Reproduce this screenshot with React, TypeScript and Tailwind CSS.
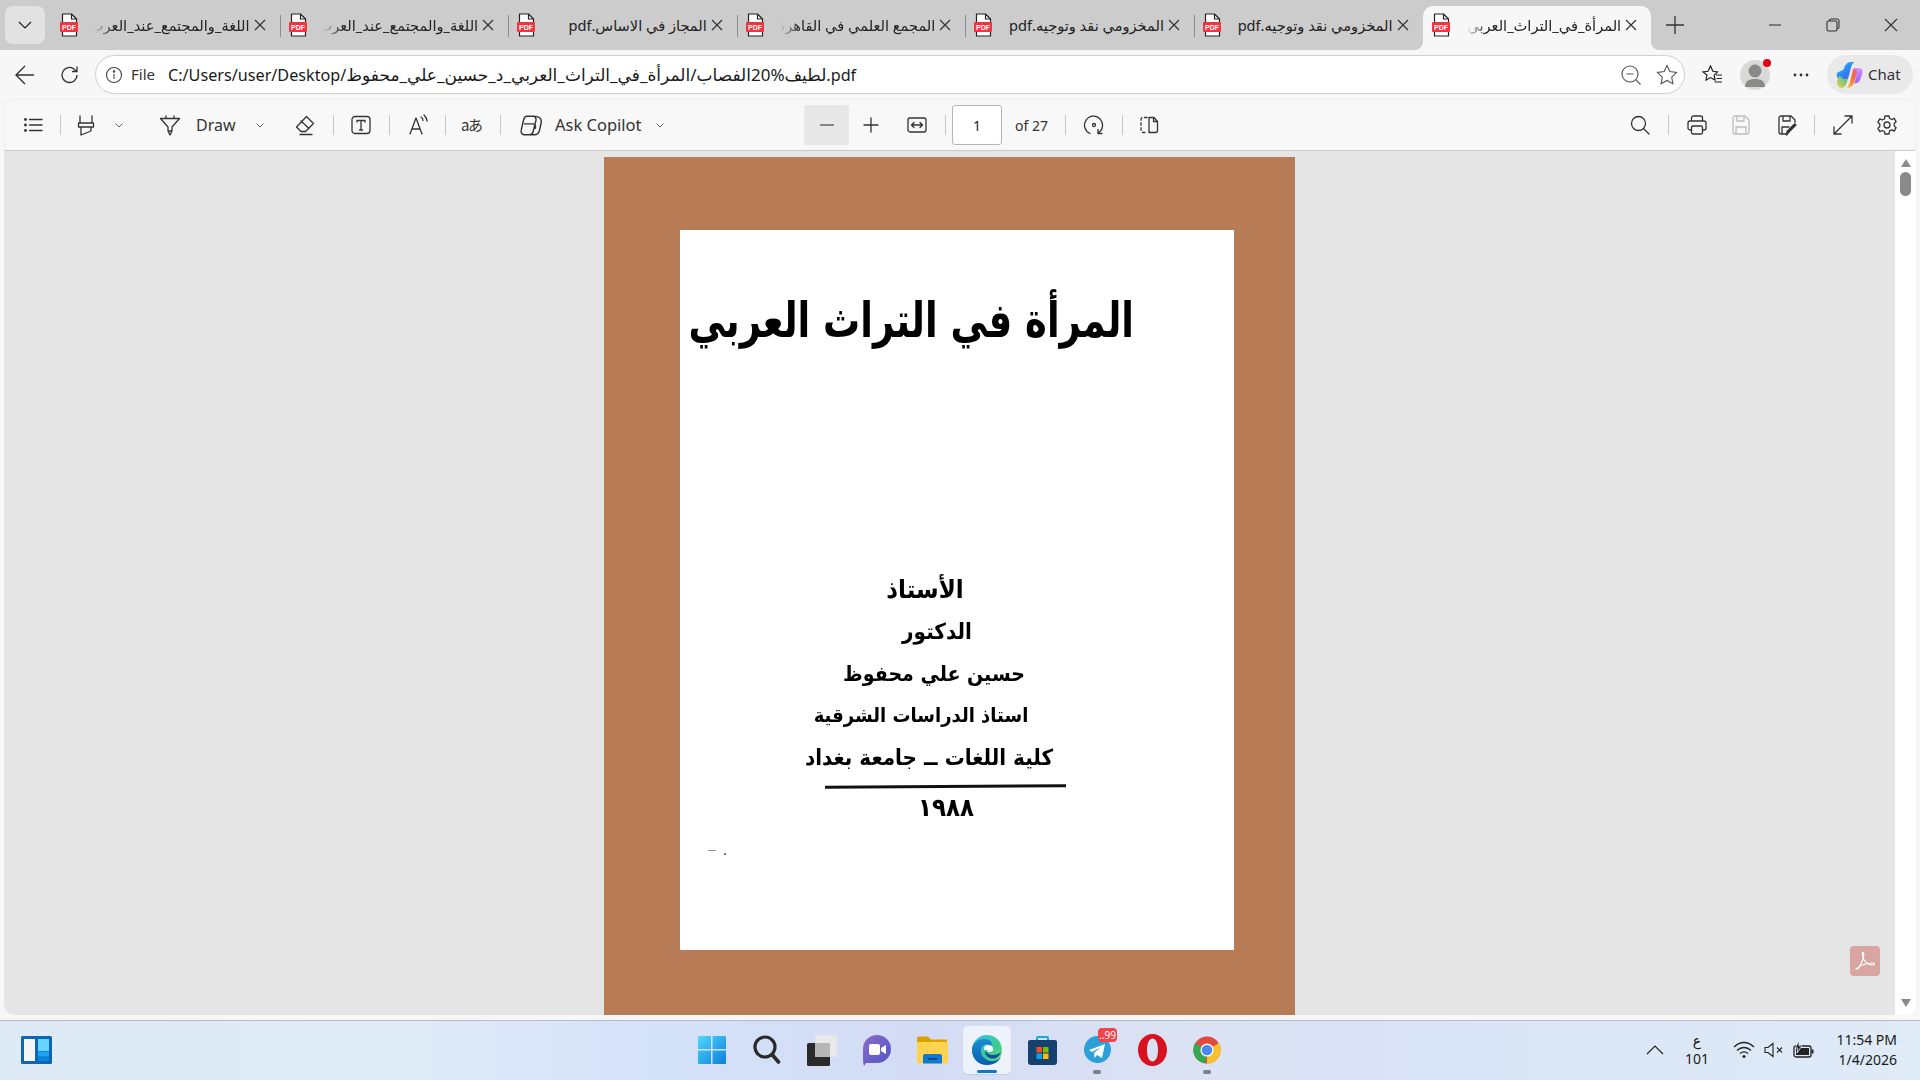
import React from "react";

const S = ({ s = 22, children, w = 1.3, c = "#333", cls = "" }: { s?: number; children: React.ReactNode; w?: number; c?: string; cls?: string }) => (
  <svg width={s} height={s} viewBox="0 0 22 22" fill="none" stroke={c} strokeWidth={w} strokeLinecap="round" strokeLinejoin="round" className={`shrink-0 ${cls}`}>
    {children}
  </svg>
);

const Sep = ({ cls = "" }: { cls?: string }) => <div className={`h-5 w-px shrink-0 bg-[#c6c6c6] ${cls}`} />;

const Chev = ({ cls = "" }: { cls?: string }) => (
  <svg width="12" height="12" viewBox="0 0 12 12" fill="none" stroke="#666" strokeWidth="1" className={`shrink-0 ${cls}`}>
    <path d="M2.5 4.5 6 8l3.5-3.5" />
  </svg>
);

const PdfIcon = () => (
  <svg width="20" height="24" viewBox="0 0 20 24" className="shrink-0">
    <path d="M3.5 1h9l5 5v17h-14z" fill="#fff" stroke="#222" strokeWidth="1.2" strokeLinejoin="round" />
    <path d="M12.5 1v5h5" fill="none" stroke="#222" strokeWidth="1.2" />
    <rect x="1" y="9" width="18" height="10" rx="1" fill="#f5333f" />
    <text x="10" y="16.800" textAnchor="middle" fontSize="7" fontWeight="700" fill="#fff" fontFamily="Liberation Sans">PDF</text>
  </svg>
);

const tabs = [
  { t: "اللغة_والمجتمع_عند_العرب", fade: true },
  { t: "اللغة_والمجتمع_عند_العرب", fade: true },
  { t: "المجاز في الاساس.pdf", fade: false },
  { t: "المجمع العلمي في القاهرة", fade: true },
  { t: "المخزومي نقد وتوجيه.pdf", fade: false },
  { t: "المخزومي نقد وتوجيه.pdf", fade: false },
  { t: "المرأة_في_التراث_العربي_", fade: true, active: true },
];

const Tab = ({ t, fade, active, sep }: { t: string; fade: boolean; active?: boolean; sep: boolean }) => (
  <div className={`relative flex h-[44px] w-[228.6px] shrink-0 items-center pb-[6px] pl-[8px] pr-[13px] ${active ? "rounded-t-[10px] bg-[#f7f7f7]" : ""}`}>
    {active && (
      <>
        <svg width="8" height="8" viewBox="0 0 8 8" className="absolute bottom-0 left-[-8px]"><path d="M8 0v8H0c4 0 8-4 8-8z" fill="#f7f7f7" /></svg>
        <svg width="8" height="8" viewBox="0 0 8 8" className="absolute bottom-0 right-[-8px]"><path d="M0 0v8H8C4 8 0 4 0 0z" fill="#f7f7f7" /></svg>
      </>
    )}
    <PdfIcon />
    <div
      dir="rtl"
      className={`ml-[15px] min-w-0 flex-1 overflow-hidden whitespace-nowrap text-[14.6px] leading-[20px] text-[#222] ${fade ? "[mask-image:linear-gradient(to_right,transparent,black_20px)]" : ""}`}
    >
      {t}
    </div>
    <svg width="14" height="14" viewBox="0 0 14 14" fill="none" stroke="#333" strokeWidth="1.2" className="ml-[3px] shrink-0">
      <path d="M2 2l10 10M12 2L2 12" />
    </svg>
    {sep && <div className="absolute right-[-1px] top-[9px] h-[22px] w-px bg-[#8e8e8e]" />}
  </div>
);

const CopilotLogo = ({ s = 28 }: { s?: number }) => (
  <svg width={s} height={s} viewBox="0 0 26 26" className="shrink-0">
    <defs>
      <linearGradient id="cpa" x1="0" y1="0" x2="1" y2="1"><stop offset="0" stopColor="#2fc4f5" /><stop offset="0.6" stopColor="#2f7df5" /><stop offset="1" stopColor="#5a4fe8" /></linearGradient>
      <linearGradient id="cpb" x1="0" y1="1" x2="1" y2="0"><stop offset="0" stopColor="#f5c542" /><stop offset="0.45" stopColor="#f5703e" /><stop offset="1" stopColor="#ee4fb0" /></linearGradient>
      <linearGradient id="cpc" x1="0" y1="1" x2="0" y2="0"><stop offset="0" stopColor="#a060f5" /><stop offset="1" stopColor="#d090fa" /></linearGradient>
      <linearGradient id="cpd" x1="0" y1="1" x2="1" y2="0"><stop offset="0" stopColor="#f0d040" /><stop offset="1" stopColor="#38c39a" /></linearGradient>
    </defs>
    <path d="M8 8c1-4 3-7 7-7h3c-2 1-3 4-4 8l-2 8H5C2 17 1 14 2 11z" fill="url(#cpa)" />
    <path d="M4 14c2 0 3 3 5 3l3-1-1 4c-1 3-3 5-5 5-5 0-5-7-2-11z" fill="url(#cpd)" />
    <path d="M11 25c3 0 6-2 7-6l2-6c1-3 3-4 5-4-1-2-3-2-5-2h-3l-3 12c-1 3-2 5-3 6z" fill="url(#cpb)" />
    <path d="M17 7h6c3 0 3 2 2 6l-1 3c-1 3-3 5-6 5l2-8c.5-3 0-5-3-6z" fill="url(#cpc)" />
  </svg>
);

const WinLogo = () => (
  <svg width="30" height="30" viewBox="0 0 30 30">
    <defs>
      <linearGradient id="wa" x1="0" y1="0" x2="1" y2="1"><stop offset="0" stopColor="#52d6fb" /><stop offset="1" stopColor="#0a7fdc" /></linearGradient>
    </defs>
    <path d="M1 2a1 1 0 011-1h12v13H1zM15.500 1H28a1 1 0 011 1v12H15.500zM1 15.500h13V29H2a1 1 0 01-1-1zM15.500 15.500H29V28a1 1 0 01-1 1H15.500z" fill="url(#wa)" />
  </svg>
);

const EdgeLogo = () => (
  <svg width="32" height="32" viewBox="0 0 32 32">
    <defs>
      <linearGradient id="ea" x1="0" y1="0" x2="1" y2="1"><stop offset="0" stopColor="#34c0e8" /><stop offset="0.6" stopColor="#3ccb92" /><stop offset="1" stopColor="#7fe36a" /></linearGradient>
      <linearGradient id="eb" x1="0" y1="0" x2="0" y2="1"><stop offset="0" stopColor="#1a8bd6" /><stop offset="1" stopColor="#0a5eb0" /></linearGradient>
    </defs>
    <circle cx="16" cy="16" r="15" fill="url(#ea)" />
    <path d="M1 16C1 8 8 5 14 5c6 0 8 5 6 7-3-3-9-2-10 3-1 6 4 12 11 12 3 0 6-1 9-4-2 5-8 8-14 8C8 31 1 25 1 16z" fill="url(#eb)" />
    <path d="M14 12c3-2 7-1 8 2 1 3-1 4-3 4-2 0-3-1-3-2h-3c0-2 0-3 1-4z" fill="#fff" opacity="0.95" />
    <path d="M14 17c0 6 6 9 11 7 2-1 4-3 5-6-2 2-5 3-8 3-4 0-6-2-8-4z" fill="#0f4fa0" />
  </svg>
);

const Center = ({ children, cls = "" }: { children: React.ReactNode; cls?: string }) => (
  <div className={`relative flex h-[48px] w-[48px] shrink-0 items-center justify-center ${cls}`}>{children}</div>
);

const Taskbar = () => (
  <div className="flex h-[60px] w-full shrink-0 items-center border-t border-[#b4bccb] bg-[linear-gradient(90deg,#dfeaf7_0%,#e0ebf8_22%,#d3e1f9_35%,#d4dcf5_48%,#dbe2f3_62%,#d9e4f6_75%,#dfebf7_100%)] pb-[2px]">
    <svg width="31" height="28" viewBox="0 0 31 28" className="ml-[21px] shrink-0">
      <rect width="31" height="28" rx="1.500" fill="#0d66b5" />
      <rect x="3" y="3" width="11" height="22" fill="#f4f4f4" />
      <rect x="17" y="3" width="11" height="12" fill="#66d4ff" />
      <rect x="17" y="15.500" width="11" height="5" fill="#1ea4f5" />
      <rect x="17" y="21" width="11" height="4" fill="#0a84e0" />
    </svg>
    <div className="ml-[636px] flex items-center gap-[7px]">
      <Center><WinLogo /></Center>
      <Center>
        <svg width="28" height="30" viewBox="0 0 28 30" fill="none" stroke="#2a2a2a">
          <circle cx="12" cy="12" r="10" strokeWidth="3.2" />
          <path d="M19.500 20l6 7" strokeWidth="3.6" strokeLinecap="round" />
        </svg>
      </Center>
      <Center>
        <svg width="30" height="32" viewBox="0 0 30 32">
          <rect x="0" y="9" width="23" height="23" rx="1.500" fill="#2a2a2a" />
          <rect x="8" y="1" width="22" height="22" rx="1.500" fill="#e8e8e8" />
          <rect x="8" y="9" width="15" height="14" fill="#b6b6b6" />
        </svg>
      </Center>
      <Center>
        <svg width="30" height="32" viewBox="0 0 30 32">
          <defs><linearGradient id="ca" x1="0" y1="0" x2="1" y2="1"><stop offset="0" stopColor="#8c6bc8" /><stop offset="1" stopColor="#4f55c8" /></linearGradient></defs>
          <path d="M15 1a14 14 0 110 28H4l-2 3c-1-3-1-6-1-10V15A14 14 0 0115 1z" fill="url(#ca)" />
          <rect x="7" y="10" width="11" height="11" rx="2" fill="#fff" />
          <path d="M19 14l5-3v9l-5-3z" fill="#fff" />
        </svg>
      </Center>
      <Center>
        <svg width="31" height="28" viewBox="0 0 31 28">
          <path d="M0 2a1.500 1.500 0 011.500-1.500H11l3 3h16V14H0z" fill="#dba100" />
          <path d="M0 6h31v20a1.500 1.500 0 01-1.500 1.500h-28A1.500 1.500 0 010 26z" fill="#ffd34f" />
          <path d="M6 27.500V20a2 2 0 012-2h15a2 2 0 012 2v7.500z" fill="#0f78d0" />
          <rect x="11" y="22" width="9" height="1.500" fill="#063f7a" />
        </svg>
      </Center>
      <Center cls="rounded-[5px] bg-[#eef3fb] shadow-[0_1px_1px_rgba(0,0,0,0.08)]">
        <EdgeLogo />
        <div className="absolute bottom-[1px] left-[14px] h-[3px] w-[20px] rounded-full bg-[#0a78d4]" />
      </Center>
      <Center>
        <svg width="29" height="30" viewBox="0 0 29 30">
          <path d="M9 6V3a1 1 0 011-1h9a1 1 0 011 1v3" fill="none" stroke="#18a5d8" strokeWidth="2" />
          <path d="M0 7a2 2 0 012-2h25a2 2 0 012 2v20a3 3 0 01-3 3H3a3 3 0 01-3-3z" fill="#16406e" />
          <rect x="8.500" y="12" width="5.500" height="5.500" fill="#f25022" />
          <rect x="15" y="12" width="5.500" height="5.500" fill="#7fba00" />
          <rect x="8.500" y="18.500" width="5.500" height="5.500" fill="#00a4ef" />
          <rect x="15" y="18.500" width="5.500" height="5.500" fill="#ffb900" />
        </svg>
      </Center>
      <Center>
        <svg width="27" height="27" viewBox="0 0 27 27">
          <circle cx="13.500" cy="13.500" r="13.500" fill="#2a9fd8" />
          <path d="M5 14l16-6-3 14-5-3-2.500 3-.5-5 7-6-9 5z" fill="#fff" />
        </svg>
        <div className="absolute left-[25px] top-[2px] flex h-[14px] w-[19px] items-center justify-center rounded-[4px] bg-[#f0434a] text-[10px] leading-none text-white">..99</div>
        <div className="absolute bottom-0 left-[20px] h-[4px] w-[8px] rounded-full bg-[#777f8a]" />
      </Center>
      <Center>
        <svg width="29" height="32" viewBox="0 0 29 32">
          <path d="M14.500 0C6.500 0 0 7 0 16s6.500 16 14.500 16S29 25 29 16 22.500 0 14.500 0zm0 4.500c3.500 0 5.500 5 5.500 11.500s-2 11.500-5.500 11.500S9 22.500 9 16s2-11.500 5.500-11.500z" fill="#d8121f" />
        </svg>
      </Center>
      <Center>
        <svg width="28" height="32" viewBox="0 0 32 32">
          <circle cx="16" cy="16" r="15.500" fill="#e0493c" />
          <path d="M16 16L29.500 8A15.500 15.500 0 0116 31.500z" fill="#fbc02d" />
          <path d="M16 16l-2 15.400A15.500 15.500 0 012.500 8z" fill="#34a853" />
          <circle cx="16" cy="16" r="7.500" fill="#fff" />
          <circle cx="16" cy="16" r="6" fill="#4a8af0" />
        </svg>
        <div className="absolute bottom-0 left-[20px] h-[4px] w-[8px] rounded-full bg-[#777f8a]" />
      </Center>
    </div>
    <div className="ml-auto flex items-center pr-[23px] text-[#1a1a1a]">
      <svg width="20" height="12" viewBox="0 0 20 12" fill="none" stroke="#222" strokeWidth="1.200"><path d="M2 10l8-8 8 8" /></svg>
      <div className="ml-[12px] flex w-[40px] flex-col items-center text-[14px] leading-[17px]">
        <span className="font-['DejaVu_Sans',sans-serif]">ع</span>
        <span>101</span>
      </div>
      <svg width="22" height="18" viewBox="0 0 22 18" fill="none" stroke="#222" strokeWidth="1.300" className="ml-[16px]">
        <path d="M1 6c6-6 14-6 20 0M4 9.500c4-4 10-4 14 0M7 12.500c2.500-2 5.500-2 8 0" />
        <circle cx="11" cy="15.500" r="1.500" fill="#222" stroke="none" />
      </svg>
      <svg width="20" height="16" viewBox="0 0 20 16" fill="none" stroke="#222" strokeWidth="1.100" className="ml-[9px]">
        <path d="M1 5.500h3L9 1.500v13l-5-4H1zM13 5.500l5 5M18 5.500l-5 5" />
      </svg>
      <svg width="22" height="18" viewBox="0 0 22 18" className="ml-[9px]">
        <rect x="1" y="5" width="17" height="11" rx="2" fill="none" stroke="#222" strokeWidth="1.300" />
        <rect x="3" y="7" width="13" height="7" fill="#222" />
        <rect x="18.500" y="8.500" width="2" height="4" fill="#222" />
        <path d="M6 0L2 7h3l-1 5 5-7H6z" fill="#222" stroke="#dfebf7" strokeWidth="0.800" />
      </svg>
      <div className="ml-[22px] flex w-[60px] flex-col items-end whitespace-nowrap text-[14px] leading-[20px]">
        <span>11:54 PM</span>
        <span>1/4/2026</span>
      </div>
    </div>
  </div>
);

const Scan = ({ children, cls = "" }: { children: React.ReactNode; cls?: string }) => (
  <div dir="rtl" className={`whitespace-nowrap font-['DejaVu_Sans',serif] font-bold text-black ${cls}`}>{children}</div>
);

export default function App() {
  return (
    <div className="flex h-[1080px] w-[1920px] flex-col overflow-hidden bg-[#f7f7f7] font-['Noto_Sans','DejaVu_Sans',sans-serif] text-[#222]">
      {/* Tab strip */}
      <div className="flex h-[50px] shrink-0 bg-[#cccccc] pt-[6px]">
        <div className="ml-[5px] flex h-[38px] w-[40px] shrink-0 items-center justify-center rounded-[8px] bg-[#e2e2e2]">
          <svg width="16" height="16" viewBox="0 0 16 16" fill="none" stroke="#222" strokeWidth="1.200"><path d="M2 5l6 6 6-6" /></svg>
        </div>
        <div className="ml-[6px] flex">
          {tabs.map((x, i) => (
            <Tab key={i} t={x.t} fade={x.fade} active={x.active} sep={i < 5} />
          ))}
        </div>
        <svg width="20" height="20" viewBox="0 0 20 20" fill="none" stroke="#333" strokeWidth="1.300" className="ml-[14px] mt-[9px] shrink-0"><path d="M10 1v18M1 10h18" /></svg>
        <div className="ml-auto flex h-[38px] items-start">
          <div className="flex h-[38px] w-[58px] items-center justify-center"><svg width="14" height="14" viewBox="0 0 14 14" stroke="#333" strokeWidth="1.100"><path d="M1 7h12" /></svg></div>
          <div className="flex h-[38px] w-[58px] items-center justify-center"><svg width="14" height="14" viewBox="0 0 14 14" fill="none" stroke="#333" strokeWidth="1.100"><rect x="1" y="3" width="10" height="10" rx="1.500" /><path d="M3.500 3V2.500A1.500 1.500 0 015 1h6a2 2 0 012 2v6a1.500 1.500 0 01-1.500 1.500H11" /></svg></div>
          <div className="flex h-[38px] w-[58px] items-center justify-center"><svg width="14" height="14" viewBox="0 0 14 14" stroke="#333" strokeWidth="1.100"><path d="M1 1l12 12M13 1L1 13" /></svg></div>
        </div>
      </div>

      {/* Address row */}
      <div className="flex h-[49px] shrink-0 items-center">
        <svg width="22" height="22" viewBox="0 0 22 22" fill="none" stroke="#333" strokeWidth="1.400" className="ml-[14px] shrink-0"><path d="M20 11H2M11 2l-9 9 9 9" /></svg>
        <svg width="20" height="20" viewBox="0 0 20 20" fill="none" stroke="#333" strokeWidth="1.300" className="ml-[24px] shrink-0"><path d="M17 10a7.500 7.500 0 11-2.500-5.600L17 6.500M17 1.500v5h-5" /></svg>
        <div className="ml-[15px] flex h-[39px] w-[1590px] shrink-0 items-center rounded-full border border-[#cfcfcf] bg-white">
          <svg width="18" height="18" viewBox="0 0 18 18" fill="none" stroke="#444" strokeWidth="1.100" className="ml-[9px] shrink-0"><circle cx="9" cy="9" r="7.500" /><path d="M9 8v5" /><circle cx="9" cy="5.500" r="0.700" fill="#444" /></svg>
          <span className="ml-[8px] text-[15px] text-[#333]">File</span>
          <span className="ml-[13px] text-[16.200px] leading-[20px] text-[#1a1a1a]">C:/Users/user/Desktop/<span className="text-[17px]">لطيف%20الفصاب/المرأة_في_التراث_العربي_د_حسين_علي_محفوظ</span>.pdf</span>
          <svg width="22" height="22" viewBox="0 0 22 22" fill="none" stroke="#555" strokeWidth="1.100" className="ml-auto shrink-0"><circle cx="10" cy="10" r="8" /><path d="M6.500 10h7M16 16l4.500 4.500" /></svg>
          <svg width="22" height="22" viewBox="0 0 22 22" fill="none" stroke="#555" strokeWidth="1.100" className="ml-[14px] mr-[6px] shrink-0"><path d="M11 1.500l2.900 6.100 6.600.9-4.800 4.600 1.200 6.600-5.900-3.200-5.900 3.200 1.200-6.600L1.500 8.500l6.600-.9z" /></svg>
        </div>
        <svg width="22" height="22" viewBox="0 0 22 22" fill="none" stroke="#222" strokeWidth="1.200" className="ml-[16px] shrink-0"><path d="M9.500 2l2.400 5.300 4.600.6-3.300 3.200.8 5-4.500-2.500-4.500 2.500.9-5L2 7.900l5-.6zM15 11h6M15.500 14.500h5.500M13.500 18h7.500" /></svg>
        <div className="relative ml-[17px] flex h-[30px] w-[30px] shrink-0 items-center justify-center overflow-visible rounded-full bg-[#d9d9d7]">
          <svg width="28" height="28" viewBox="0 0 28 28"><circle cx="14" cy="10" r="6.500" fill="#8a8a88" /><path d="M4 26c0-6 4-8 10-8s10 2 10 8z" fill="#8a8a88" /></svg>
          <div className="absolute right-[-1px] top-[-1px] h-[8px] w-[8px] rounded-full bg-[#e3000f]" />
        </div>
        <svg width="16" height="4" viewBox="0 0 16 4" fill="#333" className="ml-[23px] shrink-0"><circle cx="2" cy="2" r="1.400" /><circle cx="8" cy="2" r="1.400" /><circle cx="14" cy="2" r="1.400" /></svg>
        <div className="ml-[18px] flex h-[39px] w-[86px] shrink-0 items-center rounded-full bg-[#e9e9e9] pl-[8px]">
          <CopilotLogo />
          <span className="ml-[5px] text-[15px] text-[#333]">Chat</span>
        </div>
      </div>

      {/* PDF toolbar */}
      <div className="mx-[4px] flex h-[52px] shrink-0 items-center rounded-t-[8px] border-x border-t border-b border-x-[#eeeeee] border-t-[#eeeeee] border-b-[#c9c9c9] bg-[#f8f8f8]">
        <S cls="ml-[17px]"><circle cx="3.500" cy="5.500" r="0.800" fill="#333" /><circle cx="3.500" cy="11" r="0.800" fill="#333" /><circle cx="3.500" cy="16.500" r="0.800" fill="#333" /><path d="M7.500 5.500H20M7.500 11H20M7.500 16.500H20" /></S>
        <Sep cls="ml-[16px]" />
        <S cls="ml-[14px]"><path d="M5 2v7h12V2M3.500 9h15v4h-15zM6 13v8l10-4v-4" /></S>
        <Chev cls="ml-[16px]" />
        <S cls="ml-[34px]"><path d="M1.500 4.500h19L13 13v4H9v-4zM9 17l2 4 2-4M7 2v2.500M15 2v2.500" /></S>
        <span className="ml-[15px] w-[40px] text-[16px] leading-[20px] text-[#333]">Draw</span>
        <Chev cls="ml-[18px]" />
        <S cls="ml-[28px]"><path d="M12.500 2.500l7 7-8 8H7l-4.500-4.500zM7 7l8 7.500M6 20.500h12" /></S>
        <Sep cls="ml-[17px]" />
        <S cls="ml-[16px]"><rect x="2" y="2.500" width="18" height="17" rx="3" /><path d="M7 6.500h8M11 6.500V16M9.500 16h3M7 6.500V8M15 6.500V8" /></S>
        <Sep cls="ml-[17px]" />
        <S cls="ml-[17px]"><path d="M3 20L9 4l6 16M5 15h8M14 3c1.500 1 2 2 2 3.500M17 1c2 2 3 3.500 3 6" /></S>
        <Sep cls="ml-[16px]" />
        <span className="ml-[15px] w-[22px] shrink-0 whitespace-nowrap font-['Noto_Sans_CJK_JP','Noto_Sans',sans-serif] text-[15px] leading-[22px] tracking-[-1.500px] text-[#333]">aあ</span>
        <Sep cls="ml-[17px]" />
        <S s={24} cls="ml-[18px]"><path d="M7 3h6c2 0 3 2 2.500 4L13 17c-.5 2-2 3-4 3H5c-2 0-3.500-2-3-4l2-9c.5-2 1.500-4 3-4zM13 3c5 0 7.500 1 7.500 5L19 15c-.5 3-2 5-5 5H9M5 10h7c2 0 4 1 3 4" /></S>
        <span className="ml-[12px] w-[90px] whitespace-nowrap text-[16.500px] leading-[20px] text-[#333]">Ask Copilot</span>
        <Chev cls="ml-[9px]" />
        <div className="ml-[138px] flex h-[40px] w-[45px] shrink-0 items-center justify-center rounded-[2px] bg-[#e8e8e8]">
          <svg width="14" height="2" viewBox="0 0 14 2"><path d="M0 1h14" stroke="#666" strokeWidth="1.500" /></svg>
        </div>
        <S cls="ml-[11px]"><path d="M11 4v14M4 11h14" /></S>
        <S cls="ml-[24px]"><rect x="2" y="4" width="18" height="14" rx="2" /><path d="M6 11h10M8 8.500L5.500 11 8 13.500M14 8.500l2.500 2.500-2.500 2.500" /></S>
        <Sep cls="ml-[17px]" />
        <div className="ml-[6px] flex h-[40px] w-[50px] shrink-0 items-center justify-center rounded-[3px] border border-[#b5b5b5] bg-white text-[14px] text-[#222]">1</div>
        <span className="ml-[13px] w-[34px] whitespace-nowrap text-[14px] text-[#333]">of 27</span>
        <Sep cls="ml-[16px]" />
        <S cls="ml-[17px]"><path d="M7 19.500A9 9 0 1115 19M15 15.500v4h4" /><circle cx="11" cy="11" r="1.500" /></S>
        <Sep cls="ml-[17px]" />
        <S cls="ml-[15px]"><path d="M9 3.500H5a2 2 0 00-2 2v11a2 2 0 002 2h4" strokeDasharray="2.500 2.500" /><path d="M11 3.500h5l3.500 4v9a2 2 0 01-2 2H11zM15.500 3.500v4h4" /></S>
        <div className="ml-auto flex items-center pr-[17px]">
          <S><circle cx="9.500" cy="9.500" r="7" /><path d="M14.500 14.500L20 20" /></S>
          <Sep cls="ml-[17px]" />
          <S cls="ml-[17px]"><path d="M5.500 7V4a2 2 0 012-2h7a2 2 0 012 2v3M5.500 16H4a2 2 0 01-2-2V9a2 2 0 012-2h14a2 2 0 012 2v5a2 2 0 01-2 2h-1.500" /><rect x="5.500" y="12" width="11" height="8" rx="1.500" /></S>
          <S c="#bdbdbd" cls="ml-[22px]"><path d="M3 4a2 2 0 012-2h10l4 4v12a2 2 0 01-2 2H5a2 2 0 01-2-2zM7 2v5h7V2M6 20v-7h10v7" /></S>
          <S cls="ml-[24px]"><path d="M10 20H5a2 2 0 01-2-2V4a2 2 0 012-2h10l4 4v3M7 2v5h7V2M6 20v-7h7" /><path d="M20 11l-7 7-2.500 3 .5-3.500 7-7z" fill="#333" /></S>
          <Sep cls="ml-[16px]" />
          <S cls="ml-[17px]"><path d="M20 2L2 20M13 2h7v7M2 13v7h7" /></S>
          <S cls="ml-[22px]"><path d="M9 2h4l.6 2.500 2.200 1 2.300-1.200 2 3.400-1.900 1.800v2.400l1.900 1.800-2 3.400-2.300-1.200-2.200 1L13 20H9l-.6-2.500-2.200-1-2.300 1.200-2-3.400 1.900-1.800V10L1.900 8.200l2-3.400 2.300 1.200 2.200-1z" /><circle cx="11" cy="11" r="3" /></S>
        </div>
      </div>

      {/* Viewer */}
      <div className="mx-[4px] flex h-[864px] shrink-0 overflow-hidden rounded-b-[10px] bg-white">
        <div className="relative h-full w-[1891px] shrink-0 overflow-hidden rounded-bl-[10px] bg-[#e5e5e5] pt-[6px]">
          <div className="mx-auto h-[1000px] w-[691px] bg-[#b77b55] pl-[76px] pt-[73px]">
            <div className="relative flex h-[720px] w-[554px] flex-col items-start overflow-hidden bg-white">
              <Scan cls="ml-[10px] mt-[56px] w-[444px] origin-center scale-y-[1.3] text-center text-[37px] leading-[70px]">المرأة في التراث العربي</Scan>
              <Scan cls="ml-[140px] mt-[213px] w-[210px] scale-y-110 text-center text-[23px] leading-[40px]">الأستاذ</Scan>
              <Scan cls="ml-[142px] mt-[2px] w-[230px] scale-y-110 text-center text-[20px] leading-[40px]">الدكتور</Scan>
              <Scan cls="ml-[129px] mt-[2px] w-[250px] scale-y-110 text-center text-[19px] leading-[40px]">حسين علي محفوظ</Scan>
              <Scan cls="ml-[121px] mt-[3px] w-[240px] scale-y-110 text-center text-[18px] leading-[38px]">استاذ الدراسات الشرقية</Scan>
              <Scan cls="ml-[114px] mt-[4px] w-[270px] scale-y-110 text-center text-[20px] leading-[38px]">كلية اللغات ــ جامعة بغداد</Scan>
              <div className="ml-[145px] mt-[9px] h-[3px] w-[241px] -rotate-[0.4deg] bg-[#111]" />
              <Scan cls="ml-[218px] mt-[1px] w-[96px] scale-y-110 text-center text-[23px] leading-[36px]">١٩٨٨</Scan>
              <div className="absolute left-[28px] top-[620px] h-[1px] w-[8px] bg-[#999]" />
              <div className="absolute left-[44px] top-[623px] h-[2px] w-[2px] bg-[#777]" />
            </div>
          </div>
          <div className="absolute left-[1846px] top-[795px] flex h-[30px] w-[30px] items-center justify-center rounded-[4px] bg-[#d9a5a0]">
            <svg width="24" height="24" viewBox="0 0 24 24" fill="none" stroke="#fff" strokeWidth="1.200" strokeLinejoin="round">
              <path d="M3 20c2 1 5-4 7-10 1-3 1-7 0-7s-1 4 1 8c2 3 5 5 9 5 2 0 2-2 0-2-5 0-12 2-17 6z" />
            </svg>
          </div>
        </div>
        <div className="flex w-[21px] shrink-0 flex-col items-center pt-[8px]">
          <svg width="10" height="8" viewBox="0 0 10 8" fill="#8a8a8a"><path d="M5 0l5 8H0z" /></svg>
          <div className="mt-[5px] h-[24px] w-[11px] rounded-full bg-[#8a8a8a]" />
          <svg width="10" height="8" viewBox="0 0 10 8" fill="#8a8a8a" className="mb-[8px] mt-auto"><path d="M5 8L0 0h10z" /></svg>
        </div>
      </div>

      <div className="h-[5px] shrink-0" />
      <Taskbar />
    </div>
  );
}
